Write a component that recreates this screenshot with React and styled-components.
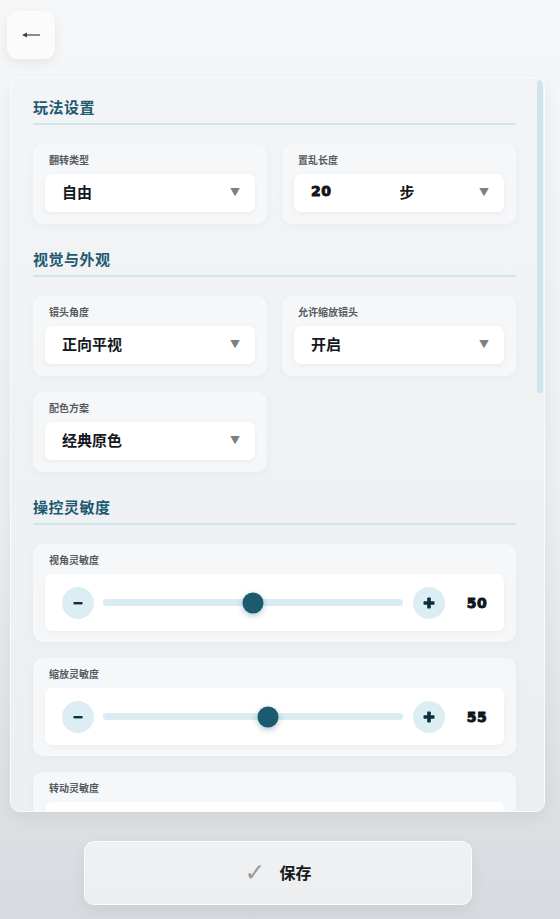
import React from "react";
import styled, { createGlobalStyle } from "styled-components";

const GlobalStyle = createGlobalStyle`
  html, body {
    margin: 0;
    padding: 0;
    height: 100%;
  }
  body {
    font-family: "Noto Sans CJK SC", "Noto Sans", sans-serif;
    background: linear-gradient(180deg, #f6f7f9 0%, #eceef1 55%, #d7dade 100%);
    overflow: hidden;
  }
`;

const Page = styled.div`
  height: 919px;
  box-sizing: border-box;
  padding: 11px 15px 14px 7px;
  display: flex;
  flex-direction: column;
`;

const BackButton = styled.button`
  width: 48px;
  height: 48px;
  border: none;
  border-radius: 10px;
  background: #fbfbfc;
  box-shadow: 0 4px 12px rgba(0, 0, 0, 0.07);
  display: flex;
  align-items: center;
  justify-content: center;
  padding: 0;
  cursor: pointer;
`;

const Panel = styled.div`
  position: relative;
  margin: 18px 0 0 3px;
  height: 735px;
  box-sizing: border-box;
  border: 1px solid #fafbfc;
  border-radius: 10px;
  background: linear-gradient(180deg, #f3f4f6 0%, #eceef1 100%);
  box-shadow: 0 6px 18px rgba(0, 0, 0, 0.06);
  overflow: hidden;
`;

const ScrollArea = styled.div`
  height: 100%;
  overflow: hidden;
  box-sizing: border-box;
  padding: 19px 28px 30px 22px;
`;

const ScrollThumb = styled.div`
  position: absolute;
  top: 2px;
  right: 1px;
  width: 6px;
  height: 313px;
  border-radius: 3px;
  background: #cfe4ec;
`;

const Section = styled.section`
  & + & {
    margin-top: 25px;
  }
`;

const SectionTitle = styled.h2`
  margin: 0 0 19px;
  padding-bottom: 6px;
  border-bottom: 2px solid #cfe5ee;
  font-size: 15px;
  line-height: 20px;
  font-weight: 700;
  color: #1d5a70;
  letter-spacing: 0.5px;
`;

const Grid = styled.div`
  display: grid;
  grid-template-columns: ${(p) => (p.$full ? "1fr" : "1fr 1fr")};
  column-gap: 15px;
  row-gap: 16px;
`;

const Card = styled.div`
  background: #f6f7f9;
  border-radius: 10px;
  padding: 9px 12px ${(p) => (p.$slider ? "11px" : "12px")};
  box-shadow: 0 2px 8px rgba(0, 0, 0, 0.03);
`;

const Label = styled.div`
  font-size: 10px;
  line-height: 14px;
  font-weight: 700;
  color: #555a60;
  padding-left: 4px;
  margin-bottom: 7px;
`;

const SelectBox = styled.div`
  height: 38px;
  background: #ffffff;
  border-radius: 7px;
  box-shadow: 0 2px 6px rgba(0, 0, 0, 0.05);
  display: flex;
  align-items: center;
  padding: 0 15px 0 17px;
  font-size: 15px;
  line-height: 1;
  font-weight: 700;
  color: #15181c;
`;

const SelectText = styled.span`
  flex: 1;
  display: flex;
  align-items: center;
  padding-bottom: 4px;
`;

const Digits = styled.span`
  font-family: "DejaVu Sans", sans-serif;
  font-weight: 700;
  font-size: 14px;
  letter-spacing: 0.5px;
  color: #0e1418;
  -webkit-text-stroke: 0.9px #0e1418;
  display: inline-block;
`;

const Unit = styled.span`
  margin-left: 68px;
`;

const Caret = styled.span`
  font-size: 10px;
  color: #7d8083;
  padding-bottom: 3px;
`;

const SliderBox = styled.div`
  height: 57px;
  background: #ffffff;
  border-radius: 7px;
  box-shadow: 0 2px 6px rgba(0, 0, 0, 0.04);
  display: flex;
  align-items: center;
  padding: 0 5px 0 17px;
`;

const RoundButton = styled.button`
  width: 32px;
  height: 32px;
  flex: none;
  border: none;
  border-radius: 50%;
  background: #dcedf4;
  display: flex;
  align-items: center;
  justify-content: center;
  padding: 0;
  cursor: pointer;
`;

const Track = styled.div`
  flex: 1;
  margin: 0 10px 0 9px;
  height: 7px;
  border-radius: 4px;
  background: #d8ecf2;
  position: relative;
`;

const Thumb = styled.div`
  position: absolute;
  top: 50%;
  width: 21px;
  height: 21px;
  border-radius: 50%;
  background: #1c5a6f;
  transform: translate(-50%, -50%);
  box-shadow: 0 2px 6px rgba(28, 90, 111, 0.35);
`;

const Value = styled(Digits)`
  width: 44px;
  margin-left: 10px;
  text-align: center;
`;

const Footer = styled.div`
  flex: 1;
  display: flex;
  align-items: flex-end;
  justify-content: center;
  padding-left: 4px;
`;

const SaveButton = styled.button`
  width: 388px;
  height: 64px;
  border: 1px solid #fafbfc;
  border-radius: 10px;
  background: linear-gradient(180deg, #f0f1f3 0%, #eceef0 100%);
  box-shadow: 0 6px 16px rgba(0, 0, 0, 0.06);
  display: flex;
  align-items: center;
  justify-content: center;
  gap: 14px;
  padding: 0 0 2px 0;
  font-family: "Noto Sans CJK SC", sans-serif;
  font-size: 16px;
  font-weight: 700;
  color: #16191c;
  cursor: pointer;
`;

const Check = styled.span`
  font-family: "DejaVu Sans", sans-serif;
  font-size: 25px;
  line-height: 1;
  font-weight: 400;
  color: #9a9c9e;
`;

function Select({ label, children }) {
  return (
    <Card>
      <Label>{label}</Label>
      <SelectBox>
        <SelectText>{children}</SelectText>
        <Caret>▼</Caret>
      </SelectBox>
    </Card>
  );
}

function Slider({ label, value }) {
  return (
    <Card $slider>
      <Label>{label}</Label>
      <SliderBox>
        <RoundButton aria-label="minus">
          <svg width="10" height="10" viewBox="0 0 10 10">
            <rect x="0.5" y="4" width="9" height="2.4" fill="#0d2f3c" />
          </svg>
        </RoundButton>
        <Track>
          <Thumb style={{ left: `${value}%` }} />
        </Track>
        <RoundButton aria-label="plus">
          <svg width="12" height="12" viewBox="0 0 12 12">
            <rect x="0.5" y="4.2" width="11" height="3.6" rx="0.8" fill="#0d2f3c" />
            <rect x="4.2" y="0.5" width="3.6" height="11" rx="0.8" fill="#0d2f3c" />
          </svg>
        </RoundButton>
        <Value>{value}</Value>
      </SliderBox>
    </Card>
  );
}

export default function App() {
  return (
    <>
      <GlobalStyle />
      <Page>
        <BackButton aria-label="back">
          <svg width="20" height="8" viewBox="0 0 20 8">
            <line x1="4" y1="4" x2="19" y2="4" stroke="#3d4247" strokeWidth="1.2" />
            <path d="M1 4 L6 1.6 L6 6.4 Z" fill="#3d4247" />
          </svg>
        </BackButton>

        <Panel>
          <ScrollArea>
            <Section>
              <SectionTitle>玩法设置</SectionTitle>
              <Grid>
                <Select label="翻转类型">自由</Select>
                <Select label="置乱长度">
                  <Digits>20</Digits>
                  <Unit>步</Unit>
                </Select>
              </Grid>
            </Section>

            <Section>
              <SectionTitle>视觉与外观</SectionTitle>
              <Grid>
                <Select label="镜头角度">正向平视</Select>
                <Select label="允许缩放镜头">开启</Select>
                <Select label="配色方案">经典原色</Select>
              </Grid>
            </Section>

            <Section>
              <SectionTitle>操控灵敏度</SectionTitle>
              <Grid $full>
                <Slider label="视角灵敏度" value={50} />
                <Slider label="缩放灵敏度" value={55} />
                <Slider label="转动灵敏度" value={45} />
              </Grid>
            </Section>
          </ScrollArea>
          <ScrollThumb />
        </Panel>

        <Footer>
          <SaveButton>
            <Check>✓</Check>
            保存
          </SaveButton>
        </Footer>
      </Page>
    </>
  );
}
